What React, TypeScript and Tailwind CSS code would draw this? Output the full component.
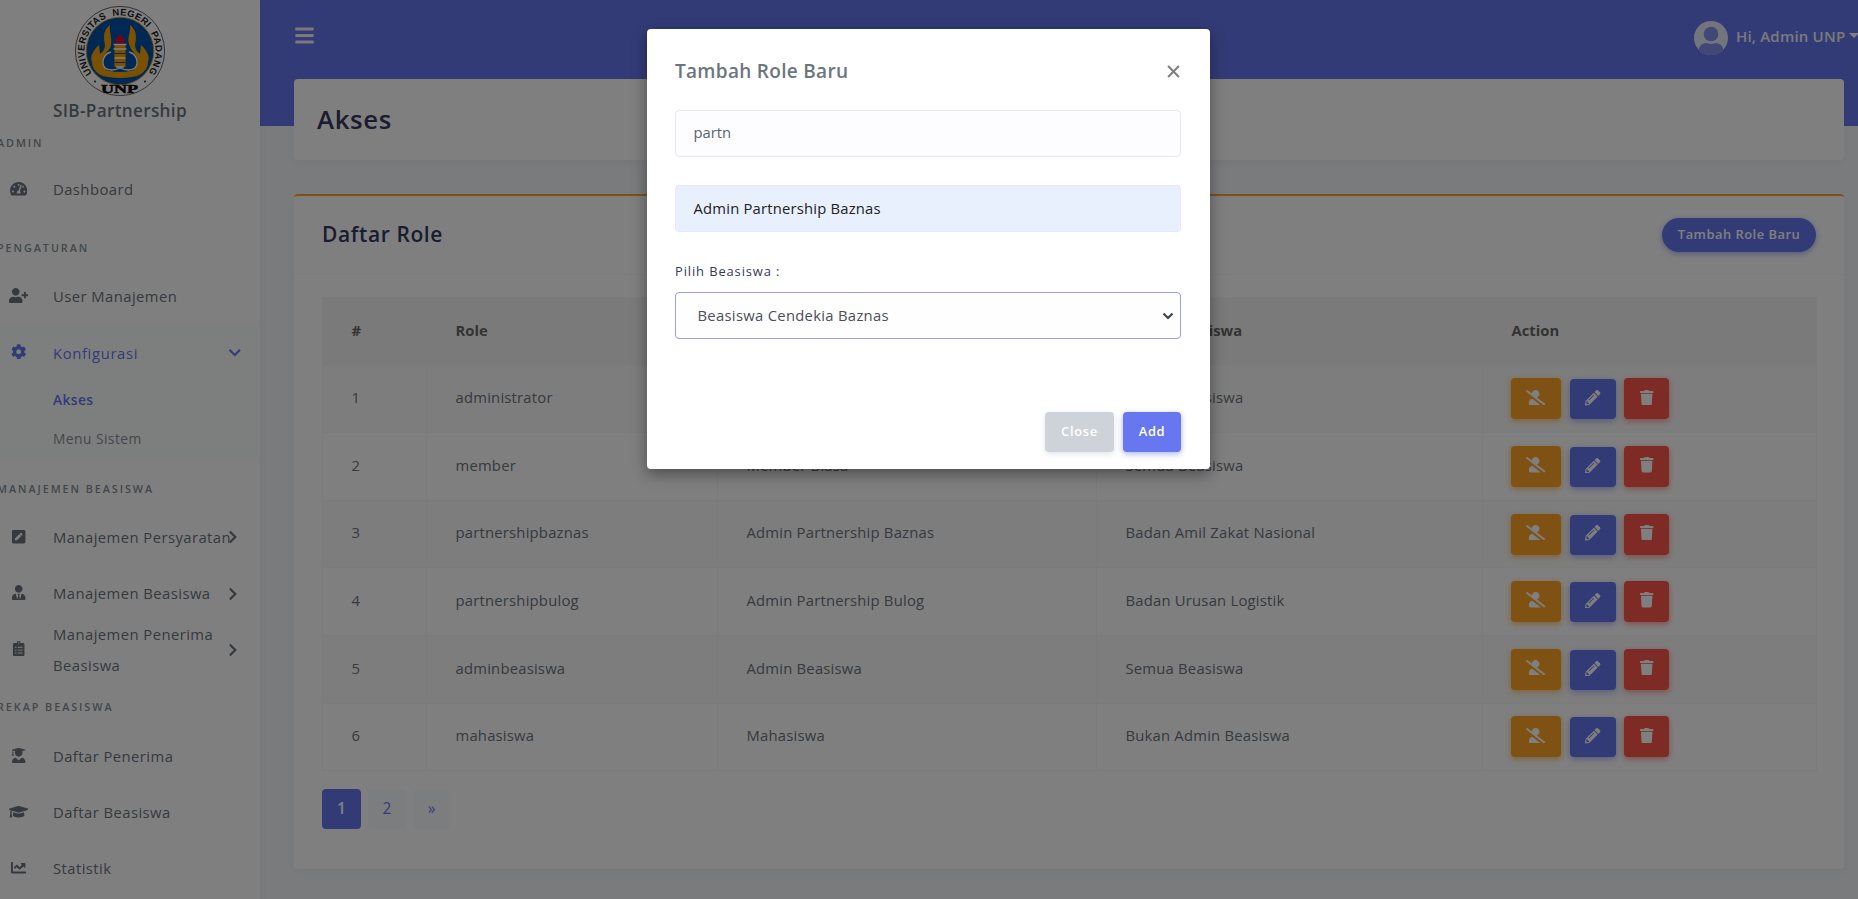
import type { ReactNode } from "react";
import {
  FaBars,
  FaChartLine,
  FaChevronDown,
  FaChevronRight,
  FaClipboardList,
  FaCog,
  FaGraduationCap,
  FaPencilAlt,
  FaPenSquare,
  FaTachometerAlt,
  FaTrash,
  FaUserGraduate,
  FaUserPlus,
  FaUserSlash,
  FaUserTie,
} from "react-icons/fa";

function Logo() {
  return (
    <svg viewBox="0 0 90 90" className="h-[90px] w-[90px] shrink-0">
      <defs>
        <path id="ring" d="M 17.7 67.9 A 35.6 35.6 0 1 1 72.3 67.9" />
      </defs>
      <circle cx="45" cy="45" r="44.6" fill="#fff" stroke="#222" strokeWidth="0.7" />
      <circle cx="45" cy="45" r="33.8" fill="#0050a8" stroke="#e8a010" strokeWidth="0.9" />
      <text
        fontFamily="Liberation Sans, Arial, sans-serif"
        fontSize="9.4"
        fontWeight="700"
        fill="#1a1a1a"
        textLength="158"
        lengthAdjust="spacing"
      >
        <textPath href="#ring" startOffset="1" textLength="158" lengthAdjust="spacing">
          UNIVERSITAS&#160; NEGERI&#160; PADANG
        </textPath>
      </text>
      <circle cx="20" cy="75.5" r="1" fill="#222" />
      <circle cx="70" cy="75.5" r="1" fill="#222" />
      <text
        x="44.5"
        y="87"
        textAnchor="middle"
        fontFamily="Liberation Serif, Times New Roman, serif"
        fontSize="12"
        fontWeight="700"
        fill="#0a0a0a"
        stroke="#0a0a0a"
        strokeWidth="0.5"
        textLength="37"
        lengthAdjust="spacingAndGlyphs"
      >
        UNP
      </text>
      <path
        d="M35 19 C27 25 29 33 30 39 C30 43 28 46 25 48 L24 39 C17 45 15 52 17 56 C17 63 23 70 33 71 Q45 73 57 71 C67 70 73 63 73 56 C75 52 73 45 66 39 L65 48 C62 46 60 43 60 39 C61 33 63 25 55 19 C56 26 52 31 54 38 C55 43 59 46 61 50 C64 57 62 64 55 65 Q45 67 35 65 C28 64 26 57 29 50 C31 46 36 43 36 38 C37 31 34 26 35 19Z"
        fill="#f5a300"
      />
      <path
        d="M36 46 C28 48 26 57 30 62 Q36 66 45 62 Q54 66 60 62 C64 57 62 48 54 46"
        fill="#0050a8"
        stroke="#fff"
        strokeWidth="1.3"
      />
      <rect x="39.5" y="38" width="11" height="23" fill="#f5a300" />
      <path d="M38.5 38.5H51.5M38.5 43H51.5M39.5 52H50.5M41 61H49" stroke="#fff" strokeWidth="1.4" />
      <path d="M40 47.5H50M40 56.5H50" stroke="#26384f" strokeWidth="1.1" />
      <path d="M45 27 C45.5 31 49.5 31 49.5 35 Q49.5 37.5 45 37.5 Q40.5 37.5 40.5 35 C40.5 31 44.5 31 45 27Z" fill="#f00030" />
    </svg>
  );
}

function SideHeader({ children, first }: { children: ReactNode; first?: boolean }) {
  return (
    <div
      className={`flex h-[50.3px] items-center text-[10.8px] font-semibold tracking-[1.95px] text-[#868e96] ${
        first ? "pt-[12px]" : "pt-[8px]"
      }`}
    >
      <span className="-ml-[3px] whitespace-nowrap">{children}</span>
    </div>
  );
}

function SideItem({ icon, children, arrow }: { icon: ReactNode; children: ReactNode; arrow?: boolean }) {
  return (
    <div className="relative flex h-[56.2px] shrink-0 items-center pb-[1px] text-[14.8px] leading-[31px] text-[#6c757d]">
      <span className="flex w-[36.5px] justify-center pb-[2px] text-[15.4px]">{icon}</span>
      <span className="ml-[16.5px] w-[190px] tracking-[0.45px]">{children}</span>
      {arrow && <FaChevronRight className="absolute right-[20px] text-[14px]" />}
    </div>
  );
}

function Sidebar() {
  return (
    <aside className="relative z-10 flex h-full w-[260px] shrink-0 flex-col overflow-hidden bg-white shadow-[0_4px_8px_rgba(0,0,0,0.05)]">
      <div className="flex h-[112px] shrink-0 flex-col items-center pr-[20px] pt-[6px]">
        <Logo />
        <div className="mt-[4px] h-[22px] text-[17.2px] font-semibold leading-[22px] tracking-[0.3px] text-[#6c757d]">
          SIB-Partnership
        </div>
      </div>
      <SideHeader first>ADMIN</SideHeader>
      <SideItem icon={<FaTachometerAlt className="w-[1.125em]" />}>Dashboard</SideItem>
      <SideHeader>PENGATURAN</SideHeader>
      <SideItem icon={<FaUserPlus className="w-[1.25em]" />}>User Manajemen</SideItem>
      <div className="h-[134.5px] shrink-0 bg-[#fbfffd]">
        <div className="relative flex h-[56.3px] items-center pb-[1px] text-[14.8px] text-[#6777ef]">
          <span className="flex w-[36.5px] justify-center pb-[2px] text-[15.4px]">
            <FaCog />
          </span>
          <span className="ml-[16.5px] tracking-[0.65px]">Konfigurasi</span>
          <FaChevronDown className="absolute right-[19px] text-[13.5px]" />
        </div>
        <div className="flex h-[39px] items-center pl-[53px] text-[13.8px] font-semibold tracking-[0.4px] text-[#6777ef]">
          Akses
        </div>
        <div className="flex h-[39px] items-center pl-[53px] text-[13.8px] tracking-[0.45px] text-[#868e96]">
          Menu Sistem
        </div>
      </div>
      <SideHeader>MANAJEMEN BEASISWA</SideHeader>
      <SideItem icon={<FaPenSquare />} arrow>
        Manajemen Persyaratan
      </SideItem>
      <SideItem icon={<FaUserTie />} arrow>
        Manajemen Beasiswa
      </SideItem>
      <SideItem icon={<FaClipboardList />} arrow>
        Manajemen Penerima Beasiswa
      </SideItem>
      <SideHeader>REKAP BEASISWA</SideHeader>
      <SideItem icon={<FaUserGraduate />}>Daftar Penerima</SideItem>
      <SideItem icon={<FaGraduationCap className="w-[1.25em]" />}>Daftar Beasiswa</SideItem>
      <SideItem icon={<FaChartLine />}>Statistik</SideItem>
    </aside>
  );
}

const roles = [
  ["1", "administrator", "Administrator", "Semua Beasiswa"],
  ["2", "member", "Member Biasa", "Semua Beasiswa"],
  ["3", "partnershipbaznas", "Admin Partnership Baznas", "Badan Amil Zakat Nasional"],
  ["4", "partnershipbulog", "Admin Partnership Bulog", "Badan Urusan Logistik"],
  ["5", "adminbeasiswa", "Admin Beasiswa", "Semua Beasiswa"],
  ["6", "mahasiswa", "Mahasiswa", "Bukan Admin Beasiswa"],
];

const cell = "border border-[#f6f6f6] p-0 pb-[3px] pl-[28.5px] text-left align-middle";

function RoleTable() {
  return (
    <table className="w-[1494px] table-fixed border-collapse text-[14.8px] tracking-[0.22px] text-[#6c757d]">
      <colgroup>
        <col className="w-[104px]" />
        <col className="w-[291px]" />
        <col className="w-[379px]" />
        <col className="w-[386px]" />
        <col className="w-[334px]" />
      </colgroup>
      <thead>
        <tr className="h-[67.6px] bg-[#f5f5f5] font-semibold tracking-normal text-[#666666]">
          <th className={cell}>#</th>
          <th className={cell}>Role</th>
          <th className={cell}>Keterangan</th>
          <th className={cell}>Nama Beasiswa</th>
          <th className={cell}>Action</th>
        </tr>
      </thead>
      <tbody>
        {roles.map((r) => (
          <tr key={r[0]} className="h-[67.6px] odd:bg-[#fafafa]">
            {r.map((v, i) => (
              <td key={i} className={cell}>
                {v}
              </td>
            ))}
            <td className="border border-[#f6f6f6] p-0 pl-[28px] align-middle">
              <div className="flex items-end text-[15.4px] text-white">
                <span className="flex h-[41px] w-[50px] items-center justify-center rounded-[4px] bg-[#ffa426] pb-[3px] shadow-[0_2px_6px_#ffc473]">
                  <FaUserSlash className="w-[1.25em]" />
                </span>
                <span className="ml-[9px] flex h-[40px] w-[46px] items-center justify-center rounded-[4px] bg-[#6777ef] pb-[3px] shadow-[0_2px_6px_#acb5f6]">
                  <FaPencilAlt />
                </span>
                <span className="ml-[8px] flex h-[41px] w-[45px] items-center justify-center rounded-[4px] bg-[#fc544b] pb-[3px] shadow-[0_2px_6px_#fd9b96]">
                  <FaTrash />
                </span>
              </div>
            </td>
          </tr>
        ))}
      </tbody>
    </table>
  );
}

function Modal() {
  return (
    <div className="absolute inset-0 z-20 flex items-start justify-center bg-black/50 pr-[1px] pt-[29px]">
      <div className="flex h-[440px] w-[563px] flex-col rounded-[4px] bg-white pl-[28px] pr-[29px] shadow-[0_5px_15px_rgba(0,0,0,0.4)]">
        <div className="flex h-[81px] shrink-0 items-center justify-between pt-[4px]">
          <h5 className="text-[19px] font-semibold tracking-[0.3px] text-[#6c757d]">Tambah Role Baru</h5>
          <svg viewBox="0 0 12 12" className="mr-[1px] h-[13px] w-[13px]">
            <path d="M1 1L11 11M11 1L1 11" stroke="#7f7f7f" strokeWidth="1.9" />
          </svg>
        </div>
        <div className="flex h-[47px] shrink-0 items-center rounded-[4px] border border-[#e4e6fc] bg-[#fdfdff] pb-[2px] pl-[17.5px] text-[14.8px] text-[#5b636b]">
          partn
        </div>
        <div className="mt-[28px] flex h-[47px] shrink-0 items-center rounded-[4px] border border-[#e4e6fc] bg-[#e8f0fe] pl-[17.5px] text-[14.8px] tracking-[0.2px] text-[#222]">
          Admin Partnership Baznas
        </div>
        <div className="mt-[28px] flex h-[24px] items-center text-[12.9px] tracking-[0.9px] text-[#34395e]">
          Pilih Beasiswa :
        </div>
        <div className="mt-[8px] flex h-[47px] shrink-0 items-center rounded-[4px] border border-[#95a0f4] bg-[#fefeff] pl-[21.5px] text-[14.8px] tracking-[0.3px] text-[#495057]">
          <span className="flex-1">Beasiswa Cendekia Baznas</span>
          <svg viewBox="0 0 12 8" className="mr-[6px] h-[8px] w-[12px]">
            <path d="M1.5 1.5L6 6L10.5 1.5" fill="none" stroke="#3f464d" strokeWidth="2.2" />
          </svg>
        </div>
        <div className="mt-[73px] flex justify-end text-[12.9px] font-semibold text-white">
          <button className="h-[40px] w-[69px] rounded-[4px] bg-[#cdd3d8] pb-[1px] tracking-[0.7px] shadow-[0_2px_6px_#e1e5e8]">
            Close
          </button>
          <button className="ml-[9px] h-[40px] w-[58px] rounded-[4px] bg-[#6777ef] pb-[1px] tracking-[0.7px] shadow-[0_2px_6px_#acb5f6]">
            Add
          </button>
        </div>
      </div>
    </div>
  );
}

export default function App() {
  return (
    <div className="relative flex h-[899px] w-[1858px] overflow-hidden bg-[#f4f6f9] font-['Open_Sans','Noto_Sans',sans-serif]">
      <Sidebar />
      <div className="flex min-w-0 flex-1 flex-col">
        <header className="flex h-[126px] shrink-0 items-start justify-between bg-[#6777ef] pl-[33.5px] text-white">
          <FaBars className="mt-[25px] text-[21px] text-[#f2f2f2]" />
          <div className="flex h-[34px] w-[170px] translate-y-[21px] items-center pl-[6px]">
            <svg viewBox="0 0 34 34" className="h-[34px] w-[34px] shrink-0">
              <defs>
                <clipPath id="avatarClip">
                  <circle cx="17" cy="17" r="17" />
                </clipPath>
              </defs>
              <g clipPath="url(#avatarClip)">
                <rect width="34" height="34" fill="#e6ebf8" />
                <circle cx="17" cy="13" r="7.3" fill="#8490ea" />
                <path d="M4 34 Q4 22 13 22 Q17 24 21 22 Q30 22 30 34Z" fill="#8490ea" />
              </g>
            </svg>
            <span className="ml-[8px] whitespace-nowrap pb-[3px] text-[15px] font-semibold tracking-[0.2px] text-[#f4f4f8]">
              Hi, Admin UNP
            </span>
            <span className="mb-[5px] ml-[4px] shrink-0 border-x-[5px] border-t-[5px] border-x-transparent border-t-white" />
          </div>
        </header>
        <main className="relative -mt-[47px] flex flex-col pl-[34px] pr-[14px]">
          <section className="flex h-[81px] items-center rounded-[4px] bg-white pl-[23px] shadow-[0_4px_8px_rgba(0,0,0,0.03)]">
            <h1 className="text-[25.8px] font-semibold tracking-[0.6px] text-[#34395e]">Akses</h1>
          </section>
          <section className="mt-[34px] h-[675px] rounded-[4px] border-t-2 border-t-[#ffa426] bg-white shadow-[0_4px_8px_rgba(0,0,0,0.03)]">
            <div className="flex h-[79px] items-center justify-between border-b border-[#f9f9f9] pl-[28px] pr-[28px]">
              <h4 className="text-[21px] font-semibold tracking-[0.6px] text-[#34395e]">Daftar Role</h4>
              <button className="h-[34px] w-[154px] rounded-full bg-[#6777ef] text-[12.9px] font-semibold tracking-[0.5px] text-white shadow-[0_2px_6px_#acb5f6]">
                Tambah Role Baru
              </button>
            </div>
            <div className="px-[28px] pt-[22px]">
              <RoleTable />
              <div className="mt-[18px] flex text-[15.4px]">
                <span className="flex h-[40px] w-[39px] items-center justify-center rounded-[4px] bg-[#6777ef] pb-[2px] font-semibold text-white">
                  1
                </span>
                <span className="ml-[7px] flex h-[40px] w-[38px] items-center justify-center rounded-[4px] bg-[#f9fafe] pb-[2px] text-[#6777ef]">
                  2
                </span>
                <span className="ml-[7px] flex h-[40px] w-[37px] items-center justify-center rounded-[4px] bg-[#f9fafe] pb-[2px] text-[#6777ef]">
                  »
                </span>
              </div>
            </div>
          </section>
        </main>
      </div>
      <Modal />
    </div>
  );
}
